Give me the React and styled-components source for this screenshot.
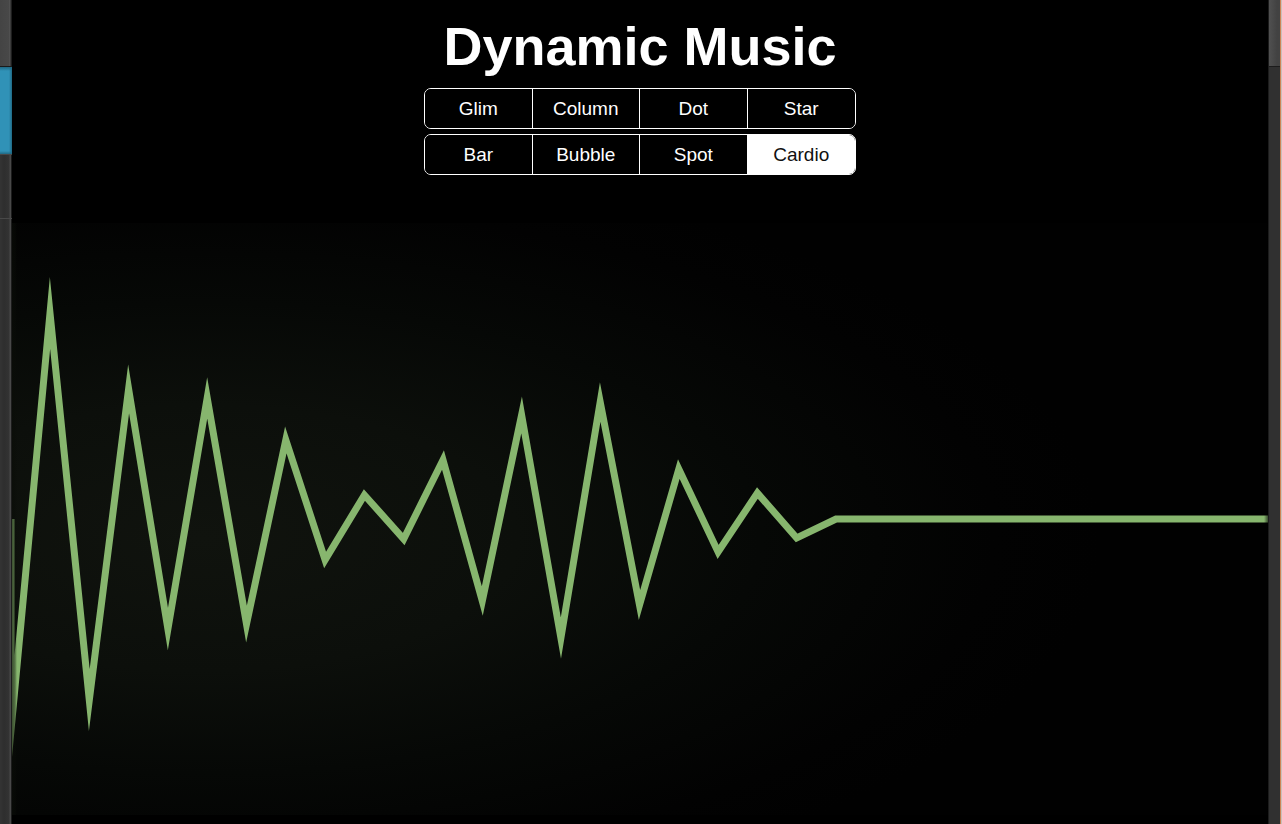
import React, { useState } from "react";
import styled, { createGlobalStyle } from "styled-components";

const GlobalStyle = createGlobalStyle`
  * { box-sizing: border-box; }
  body {
    margin: 0;
    background: #000;
    color: #fff;
    font-family: "Liberation Sans", Arial, Helvetica, sans-serif;
  }
`;

const Page = styled.div`
  display: grid;
  grid-template-columns: 12px 1fr 14px;
  min-height: 100vh;
`;

const LeftRail = styled.div`
  display: flex;
  flex-direction: column;
  background: linear-gradient(to right, #343434, #2e2e2e 4px, #333 9px, #484848 10px, #484848 11px, #1c1c1c 11px);
`;

const RailTab = styled.div`
  height: 67px;
  border-bottom: 1px solid #1a1a1a;
  background: linear-gradient(to right, #444 0, #484848 9px, #585858 10px, #1e1e1e 11px);
`;

const RailActive = styled.div`
  height: 87px;
  background:
    linear-gradient(to right, transparent 9px, #1f6883 12px),
    linear-gradient(to bottom, #1f6883, #3092b7 4px, #3092b7 84px, #1f6883);
`;

const RailItem = styled.div`
  height: 65px;
  border-top: 1px solid #484848;
  border-bottom: 1px solid #484848;
`;

const RightRail = styled.div`
  border-left: 1px solid #1c1c1c;
  border-right: 1px solid #c9c1bb;
  background: linear-gradient(to right, transparent 11px, #cd8456 11px), #303030;
`;

const RightTab = styled.div`
  height: 67px;
  margin-right: 1px;
  border-bottom: 1px solid #1c1c1c;
  background: linear-gradient(to right, #505050, #424242 8px);
`;

const Main = styled.main`
  display: flex;
  flex-direction: column;
  align-items: center;
  min-width: 0;
  padding-top: 15px;
`;

const Title = styled.h1`
  margin: 0 0 11px;
  font-size: 54px;
  line-height: 62px;
  font-weight: 700;
`;

const Modes = styled.div`
  display: grid;
  gap: 5px;
  width: 432px;
  max-width: 100%;
`;

const ModeRow = styled.div`
  display: grid;
  grid-template-columns: repeat(4, 1fr);
  height: 41px;
  border: 1px solid #fff;
  border-radius: 7px;
  overflow: hidden;
`;

const ModeButton = styled.button`
  border: 0;
  padding: 1px 0 0;
  background: ${(p) => (p.$active ? "#fff" : "#000")};
  color: ${(p) => (p.$active ? "#111" : "#fff")};
  font-family: inherit;
  font-size: 19px;
  cursor: pointer;

  &:not(:last-child) { border-right: 1px solid #fff; }
`;

const Stage = styled.svg`
  display: block;
  width: 100%;
  height: auto;
  margin-top: 48px;
  background: radial-gradient(ellipse 900px 380px at 190px 315px, #10130e 0%, #0c0f0b 35%, #060806 62%, #020202 88%, #010101 100%);
`;

const MODES = [
  ["Glim", "Column", "Dot", "Star"],
  ["Bar", "Bubble", "Spot", "Cardio"],
];

const WAVE_START = 38;
const WAVE_STEP = 39.3;
const BASELINE = 296;
const LEVELS = [
  90, 477, 166, 406, 175, 401, 217, 337, 272, 316, 237,
  378, 192, 415, 179, 382, 246, 329, 270, 315, 296,
];

const wavePoints = [
  [-1, BASELINE],
  [-1, 507],
  ...LEVELS.map((y, i) => [WAVE_START + i * WAVE_STEP, y]),
  [1256, BASELINE],
]
  .map((p) => p.join(","))
  .join(" ");

function CardioWave() {
  return (
    <Stage viewBox="0 0 1256 592" role="img" aria-label="Cardio wave">
      <defs>
        <linearGradient id="edge-left">
          <stop offset="0" stopColor="#0a0d08" stopOpacity="0.6" />
          <stop offset="0.6" stopColor="#0a0d08" stopOpacity="0.4" />
          <stop offset="1" stopColor="#0a0d08" stopOpacity="0" />
        </linearGradient>
        <linearGradient id="edge-right">
          <stop offset="0" stopColor="#000" stopOpacity="0" />
          <stop offset="1" stopColor="#000" stopOpacity="0.6" />
        </linearGradient>
      </defs>
      <polyline
        points={wavePoints}
        fill="none"
        stroke="#87b66e"
        strokeWidth="7"
        strokeMiterlimit="40"
      />
      <rect width="5" height="592" fill="url(#edge-left)" />
      <rect x="1252" width="4" height="592" fill="url(#edge-right)" />
    </Stage>
  );
}

export default function App() {
  const [active, setActive] = useState("Cardio");

  return (
    <>
      <GlobalStyle />
      <Page>
        <LeftRail>
          <RailTab />
          <RailActive />
          <RailItem />
        </LeftRail>
        <Main>
          <Title>Dynamic Music</Title>
          <Modes>
            {MODES.map((row) => (
              <ModeRow key={row[0]}>
                {row.map((mode) => (
                  <ModeButton
                    key={mode}
                    type="button"
                    $active={mode === active}
                    aria-pressed={mode === active}
                    onClick={() => setActive(mode)}
                  >
                    {mode}
                  </ModeButton>
                ))}
              </ModeRow>
            ))}
          </Modes>
          <CardioWave />
        </Main>
        <RightRail>
          <RightTab />
        </RightRail>
      </Page>
    </>
  );
}
